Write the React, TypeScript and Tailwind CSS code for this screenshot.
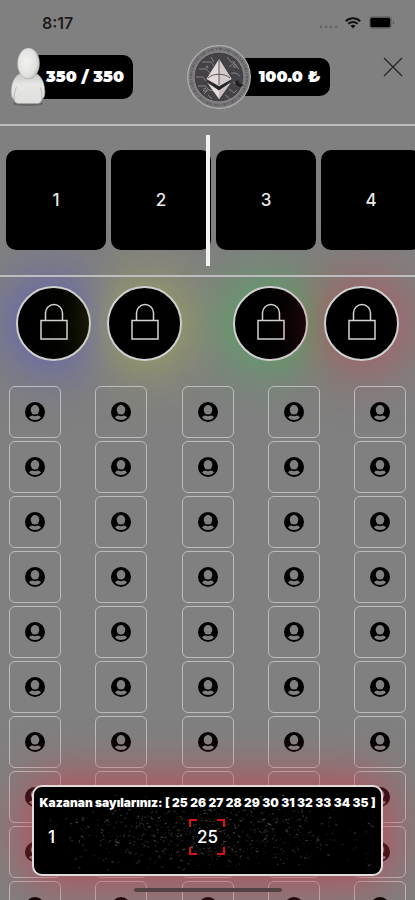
const cards = [1, 2, 3, 4];
const cells = Array.from({ length: 50 }, (_, i) => i + 1);
const winning = [25, 26, 27, 28, 29, 30, 31, 32, 33, 34, 35];

// Star field behind the draw, denser towards the middle
const stars = Array.from({ length: 800 }, (_, i) => {
  const rnd = (n: number) => {
    const v = Math.sin((i + 1) * n) * 43758.5453;
    return v - Math.floor(v);
  };
  return {
    x: ((rnd(12.9) + rnd(78.2)) / 2) * 340 + 3,
    y: 6 + ((rnd(37.7) + rnd(91.3)) / 2) * 80,
    dx: rnd(5.1) * 4 - 1,
    dy: rnd(9.4) * 3 - 1.5,
    o: 0.08 + rnd(23.4) * 0.27,
  };
});

function StatusBar() {
  return (
    <div className="flex h-[45px] items-center justify-between pl-[42px] pr-5 text-black/80">
      <span className="font-[Inter,sans-serif] text-[16px] font-semibold leading-5">8:17</span>
      <div className="flex items-center">
        <svg className="mt-2 mr-[6px]" width="20" height="4" viewBox="0 0 20 4" fill="#666">
          <circle cx="2" cy="2" r="1.4" />
          <circle cx="7" cy="2" r="1.4" />
          <circle cx="12" cy="2" r="1.4" />
          <circle cx="17" cy="2" r="1.4" />
        </svg>
        <svg className="mr-2" width="16" height="12" viewBox="0 0 16 12" fill="none" stroke="#111">
          <path d="M0.8 4.2a10.3 10.3 0 0 1 14.4 0" strokeWidth="2" />
          <path d="M3.3 6.9a6.8 6.8 0 0 1 9.4 0" strokeWidth="1.9" />
          <path d="M5.5 8.8a3.8 3.8 0 0 1 5 0L8 11.6z" fill="#111" stroke="none" />
        </svg>
        <svg width="26" height="13" viewBox="0 0 26 13">
          <rect x="0.5" y="0.5" width="22" height="12" rx="3" fill="#555" stroke="#6c6c6c" />
          <rect x="1.5" y="2" width="19.500" height="9" rx="1.500" fill="#000" />
          <path d="M23.8 4.2c1.8.6 1.8 4 0 4.6z" fill="#5d5d5d" />
        </svg>
      </div>
    </div>
  );
}

function Pawn() {
  return (
    <svg className="relative shrink-0" width="36" height="60" viewBox="0 0 36 60">
      <defs>
        <radialGradient id="pawnHead" cx="0.4" cy="0.45" r="0.65">
          <stop offset="0" stopColor="#f2f2f0" />
          <stop offset="0.7" stopColor="#e0e0de" />
          <stop offset="1" stopColor="#b4b4b2" />
        </radialGradient>
        <linearGradient id="pawnBody" x1="0" y1="0" x2="0" y2="1">
          <stop offset="0" stopColor="#c8c8c6" />
          <stop offset="0.35" stopColor="#e6e6e4" />
          <stop offset="1" stopColor="#dededc" />
        </linearGradient>
      </defs>
      <ellipse cx="18" cy="56.500" rx="15" ry="2.500" fill="#555" opacity="0.6" />
      <path
        d="M9 27C4 30 1 37 1.200 46c.1 3.500 1.200 5.500 3 6.500.6 2.500 1.800 4 4.300 4h19c2.500 0 3.700-1.500 4.300-4 1.800-1 2.900-3 3-6.500C35 37 32 30 27 27z"
        fill="url(#pawnBody)"
        stroke="#a4a4a2"
        strokeWidth="0.6"
      />
      <path d="M6.500 40c-1.800 4-2.500 8-2.200 12M30 40c1.800 4 2.200 8 1.800 12" fill="none" stroke="#b4b4b2" strokeWidth="0.9" />
      <ellipse cx="18.500" cy="16.500" rx="11" ry="15.500" fill="url(#pawnHead)" stroke="#a4a4a2" strokeWidth="0.5" />
    </svg>
  );
}

function Coin() {
  return (
    <svg className="relative shrink-0" width="64" height="64" viewBox="0 0 64 64">
      <circle cx="32" cy="32" r="31.300" fill="#7c7a7c" stroke="#b2b1b2" strokeWidth="1.200" />
      <circle cx="32" cy="32" r="28" fill="none" stroke="#615f62" strokeWidth="2.500" strokeDasharray="1.500 1.200 2.500 1 .8 1.600" />
      <circle cx="32" cy="32" r="25" fill="#444246" stroke="#8d8c90" strokeWidth="1" />
      <g fill="none" stroke="#858387" strokeWidth="1">
        <path d="M15 17h9l3 4M12 24h7l4 4M9 32h7l3 4M11 41h7l4 4 5 1M17 49l5-5M40 12l4 5h4M42 22l5-4 5 6M44 28h5l4 3M46 37l5 3h4M42 44l5 4 3-3M38 50l5 4M25 54l-4-4M24 12l3 5" />
        <circle cx="48" cy="21" r="1.500" />
        <circle cx="18" cy="45" r="1.500" />
        <circle cx="20" cy="22" r="1" />
      </g>
      <path d="M48 37l3-2 1 3 5 2-4 2-4-2z" fill="#1e1d20" />
      <path d="M32 14L19.500 34 32 41 44.500 34z" fill="#e2dada" />
      <path d="M32 14v27l12.500-7z" fill="#d3cacb" />
      <path d="M19 34.500L32 42l13-7.500L32 46z" fill="#242326" />
      <path d="M20.500 38L32 54l11.500-16L32 45.500z" fill="#e6dfdf" />
      <path d="M32 45.500V54l11.500-16z" fill="#c6bec0" />
      <path d="M32 14v26M21 33c5-5 17-5 22 0" fill="none" stroke="#5d585b" strokeWidth="1" />
    </svg>
  );
}

function Header() {
  return (
    <header className="border-b-2 border-[#bebebe]">
      <StatusBar />
      <div className="flex h-[79px] items-start justify-between pl-[10px] pr-3">
        <div className="flex h-[64px] items-center">
          <Pawn />
          <div className="-ml-4 flex h-[44px] w-[103px] items-center justify-end rounded-[10px] bg-black pr-[9px] font-[Montserrat,'DejaVu_Sans',sans-serif] text-[16px] font-black whitespace-nowrap text-white">
            350 / 350
          </div>
        </div>
        <div className="flex h-[64px] items-center">
          <Coin />
          <div className="-ml-5 flex h-[38px] w-[99px] items-center justify-end rounded-[10px] bg-black pr-[9px] font-[Montserrat,'DejaVu_Sans',sans-serif] text-[16px] font-black whitespace-nowrap text-white">
            100.0 ₺
          </div>
        </div>
        <button type="button" aria-label="Kapat" className="mt-3">
          <svg width="20" height="20" viewBox="0 0 20 20" stroke="#252525" strokeWidth="1.300">
            <path d="M1 1l18 18M19 1L1 19" />
          </svg>
        </button>
      </div>
    </header>
  );
}

function LockIcon() {
  return (
    <svg width="28" height="38" viewBox="0 0 28 38" fill="none" stroke="#d4d4d4" strokeWidth="1.500">
      <rect x="1" y="17.500" width="26" height="18.500" />
      <path d="M5.500 17.500V10a8.500 8.500 0 0 1 17 0v7.500" />
    </svg>
  );
}

function LockButton({ glow, label }: { glow: string; label: string }) {
  return (
    <button
      type="button"
      aria-label={label}
      className={`flex size-[75px] items-center justify-center rounded-full border-2 border-[#d0d0d0] bg-black pb-1 ${glow}`}
    >
      <LockIcon />
    </button>
  );
}

function PlayerCell() {
  return (
    <button
      type="button"
      aria-label="Oyuncu"
      className="flex size-[52px] items-center justify-center rounded-md border border-[#bcbcbc]"
    >
      <svg width="20" height="20" viewBox="0 0 20 20">
        <circle cx="10" cy="10" r="10" fill="#000" />
        <ellipse cx="10" cy="7.800" rx="4.300" ry="4.800" fill="#808080" />
        <path d="M4 15.600c.8-1.300 2-1.800 3.600-2 1.400.8 3.400.8 4.800 0 1.600.2 2.800.7 3.600 2-1.500 1.700-3.500 2.500-6 2.500s-4.500-.8-6-2.500z" fill="#808080" />
      </svg>
    </button>
  );
}

function DrawPanel() {
  return (
    <section className="absolute inset-x-8 bottom-6 h-[91px] rounded-[10px] border-2 border-[#e0dcdc] bg-black text-white shadow-[0_0_50px_6px_rgba(205,60,75,0.75)]">
      <svg className="absolute inset-0 size-full" viewBox="0 0 346 87" preserveAspectRatio="none" stroke="#fff" strokeWidth="0.900">
        {stars.map((s, i) => (
          <path key={i} d={`M${s.x} ${s.y}l${s.dx} ${s.dy}`} opacity={s.o} />
        ))}
      </svg>
      <div className="relative">
        <p className="pt-2 text-center font-[Inter,sans-serif] text-[12px] leading-4 font-black whitespace-nowrap">
          Kazanan sayılarınız: [ {winning.join(" ")} ]
        </p>
        <div className="mt-2 grid grid-cols-3 items-center font-[Inter,sans-serif] text-[17px] leading-5 font-medium">
          <span className="pl-[14px]">1</span>
          <div className="flex justify-center">
            <div className="relative flex size-9 items-center justify-center">
              <svg className="absolute inset-0" width="36" height="36" viewBox="0 0 36 36" fill="none" stroke="#d8140c" strokeWidth="2">
                <path d="M1 8V1h7M28 1h7v7M35 28v7h-7M8 35H1v-7" />
              </svg>
              <span>25</span>
            </div>
          </div>
        </div>
      </div>
    </section>
  );
}

export default function App() {
  return (
    <main className="relative h-screen overflow-hidden bg-[#808080]">
      <Header />

      <section className="relative border-b-2 border-[#bebebe] pt-6 pb-[25px]">
        <div className="flex gap-[5px] overflow-hidden pl-[6px]">
          {cards.map((n) => (
            <div
              key={n}
              className="flex size-[100px] shrink-0 items-center justify-center rounded-[10px] bg-black pt-[2px] font-[Inter,sans-serif] text-[17px] font-medium text-[#e8e8e8]"
            >
              {n}
            </div>
          ))}
        </div>
        <div className="absolute inset-y-[9px] left-1/2 w-1 -translate-x-1/2 bg-[#f2f2f2]" />
      </section>

      <section className="flex justify-between px-4 pt-[9px]">
        <div className="flex gap-4">
          <LockButton label="Mavi" glow="shadow-[0_0_60px_2px_rgba(80,80,215,0.85)]" />
          <LockButton label="Sarı" glow="shadow-[0_0_60px_2px_rgba(190,190,70,0.75)]" />
        </div>
        <div className="flex gap-4">
          <LockButton label="Yeşil" glow="shadow-[0_0_60px_2px_rgba(60,190,80,0.85)]" />
          <LockButton label="Kırmızı" glow="shadow-[0_0_60px_2px_rgba(210,60,70,0.75)]" />
        </div>
      </section>

      <section className="mt-[25px] grid grid-cols-[repeat(5,52px)] justify-between gap-y-[3px] px-[9px]">
        {cells.map((n) => (
          <PlayerCell key={n} />
        ))}
      </section>

      <DrawPanel />
      <div className="absolute bottom-2 left-1/2 h-1 w-[148px] -translate-x-1/2 rounded-full bg-[#514243]" />
    </main>
  );
}
